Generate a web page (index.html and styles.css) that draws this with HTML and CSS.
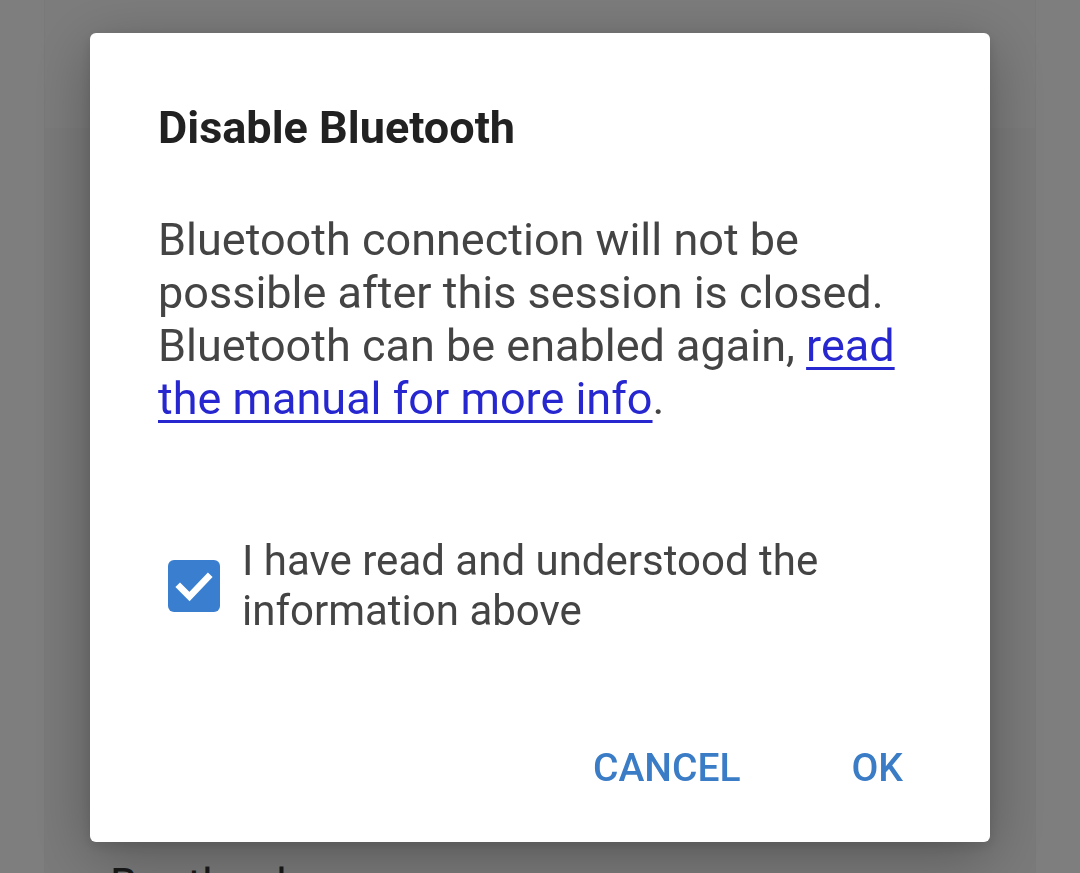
FILE: index.html
```html
<!DOCTYPE html>
<html lang="en">
<head>
<meta charset="utf-8">
<title>Disable Bluetooth</title>
<link rel="stylesheet" href="styles.css">
</head>
<body>
<div class="app">
  <div class="app-column">
    <div class="app-header"></div>
    <div class="app-body">
      <div class="app-row">Bootloader</div>
    </div>
  </div>
</div>

<div class="scrim">
  <div class="dialog" role="dialog" aria-labelledby="dlg-title">
    <h1 class="dialog-title" id="dlg-title">Disable Bluetooth</h1>
    <p class="dialog-text">Bluetooth connection will not be possible after this session is closed. Bluetooth can be enabled again, <a class="dialog-link" href="#">read the manual for more info</a>.</p>
    <label class="confirm">
      <span class="checkbox">
        <svg viewBox="0 0 52 52" width="52" height="52" aria-hidden="true">
          <rect x="0" y="0" width="52" height="52" rx="6" fill="#3a7fcf"/>
          <path d="M12 27 L21.5 36.5 L40 17" fill="none" stroke="#ffffff" stroke-width="6.5" stroke-linecap="square" stroke-linejoin="miter"/>
        </svg>
      </span>
      <span class="confirm-text">I have read and understood the information above</span>
    </label>
    <div class="dialog-actions">
      <button class="action" type="button">CANCEL</button>
      <button class="action" type="button">OK</button>
    </div>
  </div>
</div>
</body>
</html>
```

FILE: styles.css
```css
html, body {
  margin: 0;
  padding: 0;
  height: 100%;
}

body {
  background: #fdfdfd;
  font-family: Roboto, "Noto Sans", "Liberation Sans", sans-serif;
  overflow: hidden;
}

.app {
  height: 100%;
  display: flex;
  justify-content: center;
}

.app-column {
  width: 990px;
  height: 100%;
  background: #f4f4f4;
  display: flex;
  flex-direction: column;
  box-shadow: -1px 0 0 rgba(0,0,0,0.04), 1px 0 0 rgba(0,0,0,0.04);
}

.app-header {
  height: 128px;
  background: #f8f8f8;
}

.app-body {
  flex: 1;
  display: flex;
  flex-direction: column;
  justify-content: flex-end;
  overflow: hidden;
}

.app-row {
  padding: 0 0 0 65px;
  font-size: 44px;
  line-height: 44px;
  color: #333;
  margin-bottom: -34px;
}

.scrim {
  position: fixed;
  inset: 0;
  background: rgba(0, 0, 0, 0.5);
  display: flex;
  align-items: center;
  justify-content: center;
  padding-top: 2px;
}

.dialog {
  width: 900px;
  background: #ffffff;
  border-radius: 6px;
  box-shadow: 0 14px 60px rgba(0, 0, 0, 0.28), 0 4px 14px rgba(0, 0, 0, 0.12);
  padding: 68px 87px 49px 68px;
  box-sizing: border-box;
}

.dialog-title {
  margin: 0;
  font-size: 45px;
  line-height: 53px;
  font-weight: 700;
  color: #212121;
}

.dialog-text {
  margin: 59px 0 0;
  font-size: 45px;
  line-height: 53px;
  color: #444444;
}

.dialog-link {
  color: #2727d0;
  text-decoration: underline;
  text-decoration-thickness: 3px;
  text-underline-offset: 6px;
}

.confirm {
  margin: 111px 0 0 10px;
  display: flex;
  align-items: center;
  gap: 22px;
}

.checkbox {
  flex: none;
  width: 52px;
  height: 52px;
  display: block;
}

.checkbox svg {
  display: block;
}

.confirm-text {
  font-size: 42px;
  line-height: 50px;
  color: #444444;
}

.dialog-actions {
  margin-top: 107px;
  display: flex;
  justify-content: flex-end;
  gap: 111px;
}

.action {
  background: none;
  border: 0;
  padding: 0;
  font-family: Roboto, "Noto Sans", "Liberation Sans", sans-serif;
  font-size: 39px;
  line-height: 50px;
  font-weight: 500;
  color: #3b7cc6;
  letter-spacing: 0;
}
```
